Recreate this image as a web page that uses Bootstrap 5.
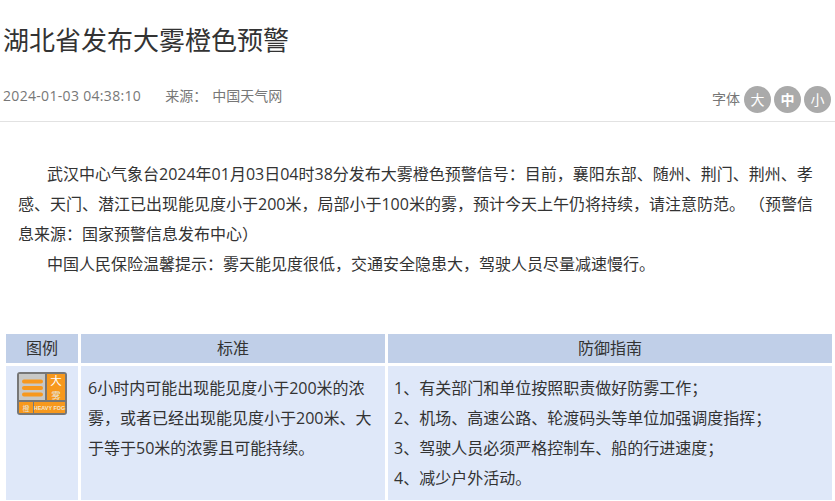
<!DOCTYPE html>
<html lang="zh">
<head>
<meta charset="utf-8">
<link href="https://cdn.jsdelivr.net/npm/bootstrap@5.3.0/dist/css/bootstrap.min.css" rel="stylesheet">
<style>
html,body{height:501px;overflow:hidden;background:#fff}
body{font-family:"Open Sans","Noto Sans CJK SC",sans-serif;color:#333;font-size:14px}
.art-title{font-size:26px;font-weight:400;line-height:40px;margin:0;padding:19px 0 0 3px;color:#333;font-family:"Noto Sans CJK SC",sans-serif}
.art-meta{height:54px;margin-top:9px;padding:14px 4px 0 3px;border-bottom:1px solid #e2e2e2;color:#777;font-size:14px;line-height:28px}
.art-date{letter-spacing:.32px}
.art-source{margin-left:24px}
.art-site{margin-left:5px}
.size-box{margin-top:3px}
.size-label{margin-right:1px;font-size:14px}
.size-dot{width:27px;height:27px;border-radius:50%;background:#aaa;color:#fff;font-size:14px;line-height:27px;text-align:center;margin-left:3px;display:block;text-decoration:none}
.size-dot.mid{font-weight:700}
.art-body{padding:37px 17px 0 18px;font-size:16px;line-height:30px;color:#333}
.art-body p{margin:0;text-indent:29px}
.guide{margin:52px 0 0 3px;width:832px;border-collapse:separate;border-spacing:3px;table-layout:fixed;font-size:16px}
.guide th{background:#c0cfe8;font-weight:400;text-align:center;height:29px;line-height:29px;padding:0;color:#333}
.guide td{background:#dfe8f9;height:132px;vertical-align:top;padding:7px 6px;line-height:30px;color:#333}
.guide td.ico-cell{padding:6px 0 0 11px}
.guide .w1{width:72px}.guide .w2{width:304px}
.guide td.crit{padding-left:7px}
</style>
</head>
<body>
<h1 class="art-title">湖北省发布大雾橙色预警</h1>
<div class="art-meta d-flex justify-content-between align-items-start">
<div><span class="art-date">2024-01-03 04:38:10</span><span class="art-source">来源&#xFF1A;</span><span class="art-site">中国天气网</span></div>
<div class="size-box d-flex align-items-center"><span class="size-label">字体</span><a class="size-dot">大</a><a class="size-dot mid">中</a><a class="size-dot">小</a></div>
</div>
<div class="art-body">
<p>武汉中心气象台2024年01月03日04时38分发布大雾橙色预警信号&#xFF1A;目前&#xFF0C;襄阳东部、随州、荆门、荆州、孝感、天门、潜江已出现能见度小于200米&#xFF0C;局部小于100米的雾&#xFF0C;预计今天上午仍将持续&#xFF0C;请注意防范。 &#xFF08;预警信息来源&#xFF1A;国家预警信息发布中心&#xFF09;</p>
<p>中国人民保险温馨提示&#xFF1A;雾天能见度很低&#xFF0C;交通安全隐患大&#xFF0C;驾驶人员尽量减速慢行。</p>
</div>
<table class="guide">
<thead><tr><th class="w1">图例</th><th class="w2">标准</th><th>防御指南</th></tr></thead>
<tbody><tr>
<td class="ico-cell">
<svg width="50" height="43" viewBox="0 0 50 43" style="display:block">
<rect x="0" y="0" width="50" height="43" rx="3" fill="#777"/>
<rect x="2" y="2" width="26" height="26" fill="#c8c8c6"/>
<rect x="30" y="2" width="18" height="26" fill="#f7981d"/>
<rect x="2" y="30" width="14" height="11" fill="#f7981d"/>
<rect x="17" y="30" width="31" height="11" fill="#f7981d"/>
<rect x="5" y="7.5" width="21" height="4" rx="2" fill="#f7981d"/>
<rect x="5" y="14" width="21" height="4" rx="2" fill="#f7981d"/>
<rect x="5" y="20.5" width="21" height="4" rx="2" fill="#f7981d"/>
<text x="39" y="12.5" font-size="11.5" fill="#fff" text-anchor="middle" font-family="Noto Sans CJK SC">大</text>
<text x="39" y="27" font-size="9.5" fill="#e8e0d0" text-anchor="middle" font-family="Noto Sans CJK SC">雾</text>
<text x="9" y="39" font-size="7" fill="#e8e0d0" text-anchor="middle" font-family="Noto Sans CJK SC">橙</text>
<text x="32.5" y="38" font-size="5.4" font-weight="700" fill="#f3e6d0" text-anchor="middle" font-family="Liberation Sans">HEAVY FOG</text>
</svg>
</td>
<td class="crit">6小时内可能出现能见度小于200米的浓雾&#xFF0C;或者已经出现能见度小于200米、大于等于50米的浓雾且可能持续。</td>
<td>1、有关部门和单位按照职责做好防雾工作&#xFF1B;<br>2、机场、高速公路、轮渡码头等单位加强调度指挥&#xFF1B;<br>3、驾驶人员必须严格控制车、船的行进速度&#xFF1B;<br>4、减少户外活动。</td>
</tr></tbody>
</table>
</body>
</html>
